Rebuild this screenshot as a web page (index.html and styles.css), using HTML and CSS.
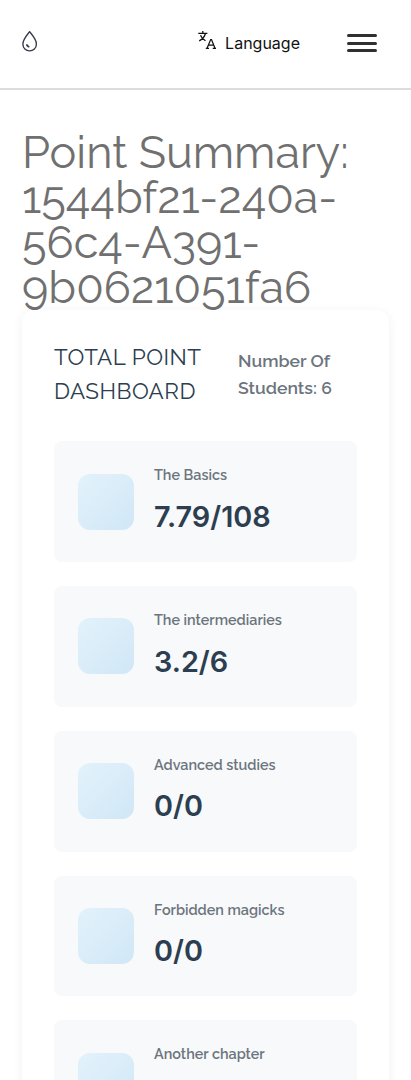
FILE: index.html
```html
<!DOCTYPE html>
<html lang="en">
<head>
<meta charset="utf-8">
<meta name="viewport" content="width=device-width, initial-scale=1">
<title>Point Summary</title>
<link rel="stylesheet" href="styles.css">
</head>
<body>
<header class="topbar">
  <a class="logo" aria-label="Home">
    <svg width="16" height="22" viewBox="0 0 16 22" fill="none" stroke="#343b4c" stroke-width="1.35" stroke-linecap="round" stroke-linejoin="round"><path d="M7.6 1.6C5.7 4.4 .9 9 .9 14c0 4.2 3 6.9 6.7 6.9s6.8-2.7 6.8-6.9C14.4 9 9.5 4.4 7.6 1.6Z"/><path stroke-width="1.7" d="M4.9 15c.4.8.9 1.3 1.8 1.7"/></svg>
  </a>
  <button class="language">
    <svg class="translate" width="19" height="20" viewBox="0 0 19 20" fill="none" stroke="#111" stroke-width="1.25"><path d="M.3 3.4h9.1M4.8 1v2.3M7.4 3.5C6.7 6.8 4.4 9.2 1.2 10.9M2.5 5.3c.9 2.4 2.6 4.1 5 5.5"/><path d="M9 18.2 12.7 9.6h.8l3.5 8.6M10.3 15.2h5.5M7.8 18.3h3.2M14.7 18.3h3.3"/></svg>
    <span>Language</span>
  </button>
  <button class="menu" aria-label="Menu"><i></i><i></i><i></i></button>
</header>
<main class="page">
  <h1 class="title">Point Summary:<br>1544bf21-240a-<br>56c4-A391-<br>9b0621051fa6</h1>
  <section class="panel">
    <div class="panel-head">
      <h2 class="heading">TOTAL POINT<br>DASHBOARD</h2>
      <p class="count">Number Of<br>Students: 6</p>
    </div>
    <div class="cards">
      <article class="card"><div class="tile"></div><div><div class="label">The Basics</div><div class="value">7.79/108</div></div></article>
      <article class="card"><div class="tile"></div><div><div class="label">The intermediaries</div><div class="value">3.2/6</div></div></article>
      <article class="card"><div class="tile"></div><div><div class="label">Advanced studies</div><div class="value">0/0</div></div></article>
      <article class="card"><div class="tile"></div><div><div class="label">Forbidden magicks</div><div class="value">0/0</div></div></article>
      <article class="card"><div class="tile"></div><div><div class="label">Another chapter</div><div class="value"></div></div></article>
    </div>
  </section>
</main>
</body>
</html>
```
FILE: styles.css
```css
* { box-sizing: border-box; }
html { height: 100%; overflow: hidden; }
body { margin: 0; height: 1080px; overflow: hidden; background: #fff; font-family: Raleway, Lato, sans-serif; }
button { border: 0; background: none; padding: 0; }
h1, h2, p { margin: 0; white-space: nowrap; }
.topbar { height: 90px; border-bottom: 2px solid #dcdcdc; display: flex; align-items: flex-start; padding: 30px 34px 0 22px; }
.logo { display: flex; }
.language { margin-left: auto; display: flex; gap: 8px; font: 400 16px/26px Inter, sans-serif; color: #111; }
.menu { margin: 4px 0 0 47px; width: 30px; display: grid; gap: 4.5px; }
.menu i { height: 3px; border-radius: 2px; background: #303030; }
.page { padding: 40px 22px 0; }
.title { font-weight: 400; font-size: 45px; line-height: 45px; color: #707070; height: 180px; }
.panel { position: relative; height: 1000px; padding: 32px; border-radius: 12px; background: #fff; box-shadow: 0 2px 12px rgba(0,0,0,.06); }
.panel-head { display: flex; height: 67.3px; }
.heading { width: 184px; font-weight: 400; font-size: 22.4px; line-height: 34px; letter-spacing: .5px; color: #2c3e50; margin-top: -2px; }
.count { font-weight: 600; font-size: 17.6px; line-height: 27px; color: #6c757d; padding-top: 5px; }
.cards { display: grid; gap: 24px; margin-top: 32px; }
.card { height: 120.8px; padding: 24px; border-radius: 8px; background: #f8f9fb; display: flex; align-items: center; gap: 20px; }
.tile { width: 56px; height: 56px; border-radius: 12px; background: linear-gradient(135deg, #e3f2fb, #d0e7f6); }
.label { font-weight: 600; font-size: 14.4px; line-height: 20px; color: #6c757d; margin-bottom: 9.6px; white-space: nowrap; }
.value { height: 43.2px; font: 600 28.8px/43.2px Inter, sans-serif; color: #2c3e50; }
```
